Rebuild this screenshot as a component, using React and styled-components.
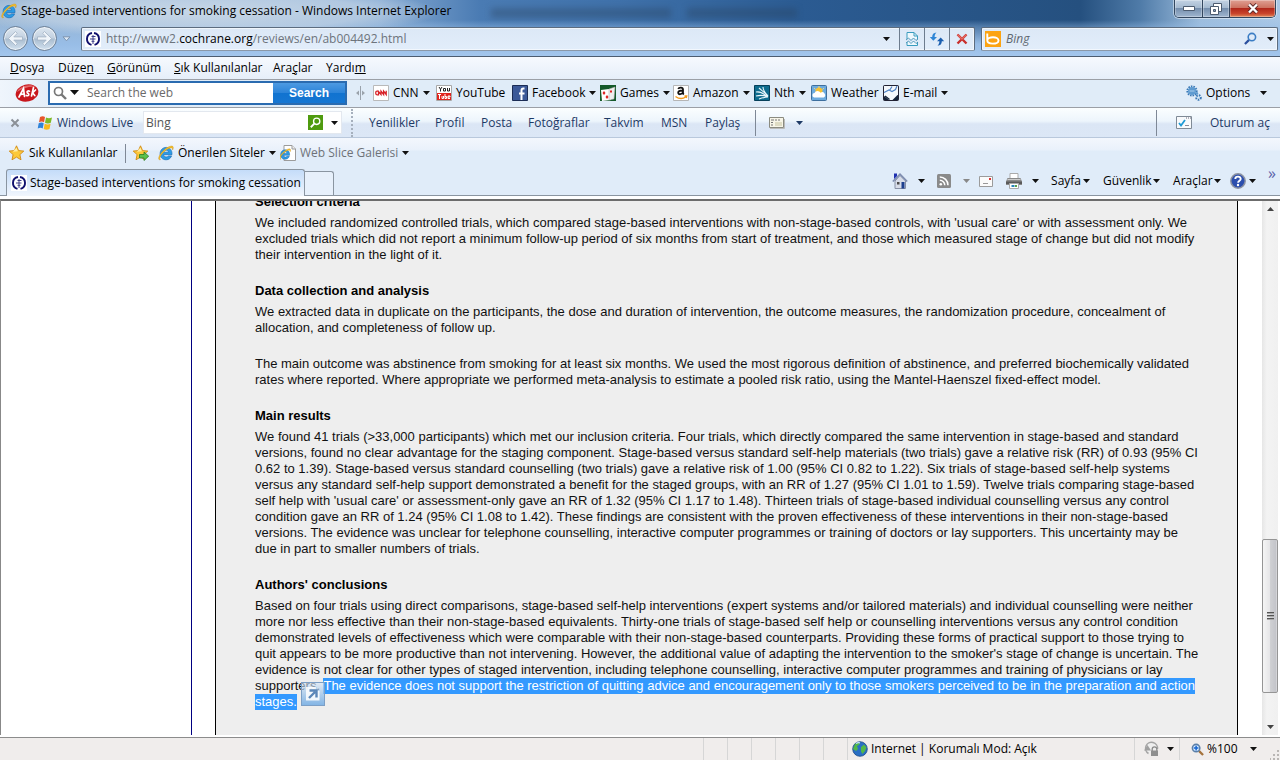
import React from "react";
import styled, { createGlobalStyle, css } from "styled-components";

const uiFont = '"Open Sans", "Noto Sans", sans-serif';

const GlobalStyle = createGlobalStyle`
  * { box-sizing: border-box; }
  html, body { margin: 0; padding: 0; }
  body { font-family: ${uiFont}; font-size: 12px; line-height: 16px; color: #111; background: #fff; overflow: hidden; }
  button, input { font: inherit; color: inherit; margin: 0; padding: 0; border: 0; background: none; border-radius: 0; outline: none; }
  button { text-align: left; white-space: nowrap; }
  a { color: inherit; text-decoration: none; }
  svg { display: block; flex: none; }
`;

const Window = styled.div`
  display: flex;
  flex-direction: column;
  height: 100vh;
  overflow: hidden;
`;

/* ---------- window frame ---------- */
const Glass = styled.header`
  background:
    radial-gradient(ellipse 240px 26px at 200px 12px, rgba(205, 219, 233, 0.9) 0, rgba(190, 209, 229, 0.75) 70%, rgba(170, 195, 224, 0) 100%),
    linear-gradient(180deg, rgba(150, 190, 232, 0) 20px, rgba(152, 190, 231, 0.35) 26px, #98bde6 44px, #a3c6ec 100%),
    linear-gradient(90deg, #9ab6d3 0, #87abd3 380px, #4a7bb3 480px, #3f71aa 620px, #2b5b92 800px, #25507f 1080px, #4f7ba8 1140px, #9dbddd 1200px, #aac8e6 100%);
  border-bottom: 1px solid #4c5c70;
`;

const TitleBar = styled.div`
  display: flex;
  align-items: flex-start;
  height: 26px;
  padding: 0 4px 0 1px;
`;

const Title = styled.h1`
  margin: 3px 0 0 4px;
  font-size: 12px;
  line-height: 16px;
  font-weight: 400;
  color: #000;
  white-space: nowrap;
`;

const TitleIcon = styled.div`
  margin-top: 3px;
`;

const GhostTitles = styled.div`
  flex: 1;
  display: flex;
  gap: 16px;
  margin: 8px 0 0 40px;
  filter: blur(3px);
`;

const Ghost = styled.i`
  width: ${(p) => p.$w}px;
  height: 10px;
  background: rgba(40, 62, 90, 0.35);
`;

const WindowButtons = styled.div`
  display: flex;
  border: 1px solid #33475f;
  border-top: 0;
  border-radius: 0 0 5px 5px;
  box-shadow: 0 0 0 1px rgba(255, 255, 255, 0.45);
  overflow: hidden;
`;

const WindowButton = styled.button`
  display: flex;
  align-items: center;
  justify-content: center;
  width: ${(p) => (p.$close ? 46 : 27)}px;
  height: 17px;
  background: ${(p) =>
    p.$close
      ? "linear-gradient(#dfa093 0, #cd7260 45%, #b1281b 50%, #c9452c 80%, #e08a5c 100%)"
      : "linear-gradient(#c3d3e4 0, #a5bad0 45%, #768fae 50%, #9fb6cf 100%)"};
  box-shadow: inset 0 0 0 1px rgba(255, 255, 255, 0.3);
  & + & { border-left: 1px solid #33475f; }
`;

const NavRow = styled.div`
  display: flex;
  align-items: center;
  height: 30px;
  padding: 0 2px 5px 3px;
`;

const RoundButton = styled.button`
  display: flex;
  align-items: center;
  justify-content: center;
  width: 25px;
  height: 25px;
  margin-right: 4px;
  border: 1px solid #6c7f95;
  border-radius: 50%;
  background: linear-gradient(#dde7f1 0, #c3d1e0 48%, #a9bccf 52%, #d3e2f0 100%);
  box-shadow: inset 0 0 0 1px rgba(255, 255, 255, 0.6);
`;

const NavHistory = styled.button`
  display: flex;
  justify-content: center;
  width: 10px;
  margin-right: 10px;
`;

const fieldBox = css`
  display: flex;
  align-items: center;
  height: 24px;
  border: 1px solid #5c6c7f;
  border-bottom-color: #8a98a8;
  border-radius: 2px;
  background: linear-gradient(#dce8f6, #e2edfa);
  box-shadow: inset 0 0 0 1px rgba(255, 255, 255, 0.55);
`;

const AddressBox = styled.div`
  ${fieldBox}
  flex: 1;
  padding-left: 3px;
  margin-right: 6px;
`;

const Favicon = styled.span`
  display: flex;
  align-items: center;
  justify-content: center;
  width: 16px;
  height: 16px;
  background: #fff;
  flex: none;
`;

const Address = styled.div`
  flex: 1;
  margin-left: 5px;
  color: #6d747c;
  white-space: nowrap;
  strong { font-weight: 400; color: #000; }
`;

const AddressButton = styled.button`
  display: flex;
  align-items: center;
  justify-content: center;
  align-self: stretch;
  width: 25px;
  border-left: ${(p) => (p.$plain ? "0" : "1px solid #6d7c8e")};
`;

const SearchBox = styled.form`
  ${fieldBox}
  width: 297px;
  padding: 0 3px;
`;

const SearchInput = styled.input`
  flex: 1;
  min-width: 0;
  margin-left: 5px;
  font-style: italic;
  &::placeholder { color: #5f6871; opacity: 1; }
`;

/* ---------- tool bars ---------- */
const MenuBar = styled.nav`
  display: flex;
  align-items: center;
  height: 23px;
  padding-left: 10px;
  background: linear-gradient(#f6f9fe, #e6eef9);
  border-bottom: 1px solid #9b9fa6;
`;

const MenuItem = styled.button`
  width: ${(p) => p.$w}px;
  color: #000;
`;

const AskBar = styled.div`
  display: flex;
  align-items: center;
  height: 28px;
  padding: 0 13px 2px 15px;
  background: linear-gradient(90deg, #eff5fc, #e0ecf8 60px);
  border-bottom: 1px solid #9b9fa6;
`;

const AskSearch = styled.form`
  display: flex;
  height: 24px;
  margin: 0 7px 0 9px;
  border: 2px solid #2a6bb0;
  background: #fff;
`;

const AskScope = styled.button`
  display: flex;
  align-items: center;
  gap: 3px;
  padding-left: 3px;
`;

const AskInput = styled.input`
  width: 194px;
  padding-left: 8px;
  &::placeholder { color: #6a6a6a; opacity: 1; }
`;

const AskSubmit = styled.button`
  width: 72px;
  text-align: center;
  font-family: "Liberation Sans", Arial, sans-serif;
  font-size: 12px;
  font-weight: 700;
  color: #fff;
  background: linear-gradient(#4d9ae2 0, #2c84d9 48%, #1173d0 52%, #1676d2 100%);
`;

const Splitter = styled.span`
  width: 19px;
  padding-left: 2px;
`;

const Tool = styled.button`
  display: flex;
  align-items: center;
  flex: none;
  width: ${(p) => p.$w}px;
  color: ${(p) => (p.$muted ? "#6e7278" : "#000")};
`;

const ToolText = styled.span`
  flex: 1;
  margin: 0 4px;
  white-space: nowrap;
`;

const CaretSlot = styled.span`
  flex: none;
  width: ${(p) => p.$w || 14}px;
`;

const Spacer = styled.div`
  flex: 1;
`;

const LiveBar = styled.div`
  display: flex;
  align-items: center;
  height: 30px;
  padding-left: 9px;
  color: #1e3a66;
  background: linear-gradient(#fbfeff 0, #edf5fc 45%, #dbe6f5 55%, #dce7f6 100%);
  border-bottom: 1px solid #b9c8dc;
`;

const CloseTool = styled.button`
  width: 28px;
  padding-left: 1px;
`;

const LiveBrand = styled.a`
  display: flex;
  align-items: center;
  gap: 4px;
  width: 106px;
  white-space: nowrap;
`;

const LiveSearch = styled.form`
  display: flex;
  align-items: center;
  width: 199px;
  height: 23px;
  padding-right: 3px;
  background: #fff;
  border: 1px solid #e3e8ef;
`;

const LiveInput = styled.input`
  flex: 1;
  min-width: 0;
  padding-left: 2px;
  color: #555;
`;

const SquareButton = styled.button`
  display: flex;
  align-items: center;
  justify-content: center;
  width: 15px;
  height: 15px;
  margin-right: 8px;
  background: #4f9b0f;
`;

const Dots = styled.i`
  height: 28px;
  margin: 0 16px 0 9px;
  border-left: 2px dotted #a6b0bd;
`;

const LiveLink = styled.a`
  width: ${(p) => p.$w}px;
  white-space: nowrap;
`;

const Rule = styled.i`
  flex: none;
  width: 1px;
  height: ${(p) => p.$h || 26}px;
  margin-right: ${(p) => p.$gap || 0}px;
  background: #7e8896;
`;

const FavBar = styled.div`
  display: flex;
  align-items: center;
  height: 30px;
  padding-left: 9px;
  background: linear-gradient(#f3f7fd 0, #e9f1fb 12px, #e0ecf9 13px);
`;

const TabBar = styled.div`
  display: flex;
  align-items: flex-end;
  height: 28px;
  padding: 0 4px 0 6px;
  background: #e0ecf9;
  border-bottom: 1px solid #8a95a1;
`;

const Tab = styled.button`
  display: flex;
  align-items: center;
  gap: 3px;
  width: 299px;
  height: 27px;
  padding: 0 4px;
  margin-bottom: -1px;
  border: 1px solid #8a95a1;
  border-bottom: 0;
  border-radius: 3px 3px 0 0;
  background: linear-gradient(#c4dcf9, #f1f6fd);
  color: #000;
`;

const NewTab = styled.button`
  width: 29px;
  height: 24px;
  border: 1px solid #8a95a1;
  border-left: 0;
  border-bottom: 0;
  border-radius: 0 3px 0 0;
  background: #e7f0fb;
`;

const Commands = styled.div`
  display: flex;
  align-items: center;
  height: 28px;
`;

const Command = styled.button`
  display: flex;
  align-items: center;
  flex: none;
  width: ${(p) => p.$w}px;
  color: #000;
`;

const CommandLabel = styled.span`
  flex: 1;
`;

const More = styled.button`
  align-self: flex-start;
  height: 12px;
  line-height: 12px;
  font-size: 16px;
  color: #5a62a8;
`;

/* ---------- page ---------- */
const Viewport = styled.main`
  flex: 1;
  min-height: 0;
  display: flex;
  margin-top: 3px;
  padding-right: 2px;
  border-top: 2px solid #6c6c6c;
  border-left: 1px solid #888;
  overflow: hidden;
`;

const LeftColumn = styled.div`
  width: 191px;
  border-right: 1px solid #000080;
`;

const Sheet = styled.article`
  flex: 1;
  min-width: 0;
  margin: 0 24px 0 23px;
  padding: 0 39px;
  border: solid #000;
  border-width: 0 1px;
  background: #eee;
  overflow: hidden;
  font-family: "Liberation Sans", Arial, sans-serif;
  font-size: 13px;
  line-height: 16px;
  color: #111;
`;

const Scrolled = styled.div`
  margin-top: -7px;
`;

const Heading = styled.h2`
  margin: 0 0 5px;
  font-size: 13px;
  line-height: 16px;
  font-weight: 700;
  color: #000;
`;

const Para = styled.p`
  margin: 0 0 20px;
  white-space: nowrap;
`;

const Selected = styled.mark`
  padding-bottom: 1px;
  background: #3399ff;
  color: #fff;
`;

const Anchor = styled.span`
  position: relative;
`;

const Accelerator = styled.button`
  position: absolute;
  left: 4px;
  bottom: 3px;
  display: flex;
  align-items: center;
  justify-content: center;
  width: 24px;
  height: 24px;
  border: 1px solid #7c9fc6;
  background: linear-gradient(rgba(214, 229, 245, 0.6), rgba(120, 175, 228, 0.9));
`;

const ScrollTrack = styled.div`
  display: flex;
  flex-direction: column;
  width: 16px;
  background: linear-gradient(90deg, #e6e6e6, #f3f3f3 30%, #f0f0f0);
`;

const ScrollArrow = styled.button`
  display: flex;
  align-items: center;
  justify-content: center;
  height: 16px;
`;

const ScrollGap = styled.i`
  flex: ${(p) => p.$part};
`;

const Thumb = styled.div`
  flex: 153;
  display: flex;
  flex-direction: column;
  justify-content: center;
  align-items: center;
  gap: 1px;
  border: 1px solid #959595;
  border-radius: 2px;
  background: linear-gradient(90deg, #f5f5f5 0, #e6e6e8 48%, #cfd0d3 52%, #c4c5ca 90%, #dcdcdf 100%);
  i { width: 7px; height: 2px; background: #555; border-bottom: 1px solid #aaa; }
`;

/* ---------- status bar ---------- */
const StatusBar = styled.footer`
  display: flex;
  align-items: center;
  height: 23px;
  margin-top: 2px;
  border-top: 1px solid #8c8c8c;
  background: #f0edec;
  color: #000;
`;

const Pane = styled.div`
  display: flex;
  align-items: center;
  align-self: stretch;
  width: ${(p) => p.$w}px;
  padding-left: ${(p) => p.$pad || 0}px;
  border-left: 1px solid #d6d6d6;
  white-space: nowrap;
`;

const PaneText = styled.span`
  flex: 1;
  margin-left: 3px;
`;

const Grip = styled.span`
  align-self: flex-end;
`;

/* ---------- drawings ---------- */
const Svg = ({ w = 16, h = 16, vb, children }) => (
  <svg width={w} height={h} viewBox={vb || `0 0 ${w} ${h}`} fill="none" aria-hidden="true">
    {children}
  </svg>
);

const Caret = ({ color = "#111" }) => (
  <Svg w={7} h={4}>
    <path d="M0 0h7L3.5 4z" fill={color} />
  </Svg>
);

const IeShape = () => (
  <>
    <path d="M14 9.700H5.600c.2 1.400 1.200 2.200 2.600 2.200 1 0 1.700-.4 2.200-1h3.200c-.8 2.400-2.900 3.900-5.500 3.900-3.600 0-6-2.500-6-6C2.100 5 4.700 2.400 8.200 2.400c3.800 0 6.100 2.900 5.800 7.300zM5.600 7.200h4.900C10.300 5.800 9.400 5.200 8.100 5.200S5.800 5.900 5.600 7.200z" fill="#2b9be6" stroke="#1464ad" strokeWidth=".6" />
    <path d="M2.600 14.600C-.5 15.600.3 11.400 3.600 7.500 7.400 3 13.200-.2 14.900 1.500c.7.8.3 2.300-.3 3.500.1-1.300 0-2-1-2.100C10.800 2.700 6.600 5.600 4 9c-2 2.700-3 5.200-1.400 5.600z" fill="#f5c12e" stroke="#c78d14" strokeWidth=".4" />
  </>
);

const IeIcon = () => <Svg><IeShape /></Svg>;

const IePage = () => (
  <Svg>
    <path d="M4 .5h8l3.500 3.500v11.500H4z" fill="#fff" stroke="#9b9b9b" />
    <path d="M12 .5V4h3.500" stroke="#9b9b9b" fill="#eee" />
    <g transform="translate(-1 3) scale(.76)"><IeShape /></g>
  </Svg>
);

const Cochrane = () => (
  <Svg>
    <path d="M7 2A6.100 6.100 0 0 0 6.500 13.900M9 2a6.100 6.100 0 0 1 .5 11.900" stroke="#10106e" strokeWidth="1.900" />
    <path d="M8 4v9M6.500 5.500h4M5 8h5.500M6.500 10.300h3" stroke="#3c3c88" strokeWidth="1" />
  </Svg>
);

const RoundArrow = ({ flip }) => (
  <Svg w={17} h={17}>
    <g transform={flip ? "matrix(-1 0 0 1 17 0)" : undefined}>
      <path d="M8.500 1.500l-7 7 7 7 1.800-1.800-3.500-3.600H15.500V6.900H6.800l3.500-3.600z" fill="#f0f5fa" stroke="#a3b3c4" strokeWidth=".8" />
    </g>
  </Svg>
);

const BrokenPage = () => (
  <Svg>
    <path d="M3 8V1.500h7L13.500 5v3M3 11v3.500h10.500V11" fill="#eef8fd" stroke="#3a9cbf" />
    <path d="M10 1.500V5h3.500" stroke="#3a9cbf" />
    <path d="M2 9l2.500-2L7 9.500 9.500 7 12 9.500 14 8M2 12l2.500-2L7 12.500 9.500 10l2.500 2.500 2-1.500" stroke="#3f8fb3" strokeWidth=".9" />
  </Svg>
);

const Refresh = () => (
  <Svg>
    <path d="M7.500 1.500C4.500 1.800 3.200 3.200 3.200 6H.8L4.300 9.700 8 6H5.600c0-1.800.5-3 1.900-4.500z" fill="#2f86d6" />
    <path d="M8.500 14.800c3-.3 4.300-1.700 4.300-4.500h2.400L11.700 6.600 8 10.300h2.400c0 1.800-.5 3-1.900 4.500z" fill="#1b5fb0" />
  </Svg>
);

const StopX = () => (
  <Svg w={14} h={14}>
    <path d="M2.500 2.500l9 9M11.500 2.500l-9 9" stroke="#c9302c" strokeWidth="2.400" />
    <path d="M2.500 2.500L7 7l4.500-4.500" stroke="#e26a63" strokeWidth="1.400" />
  </Svg>
);

const BingIcon = () => (
  <Svg>
    <path d="M0 0h16v16H0z" fill="#fca311" />
    <path d="M2.300 2.500v6.800M2.300 9.500c0 2 2.200 3.100 5.500 3.100s5.700-1 5.700-3.200S11 6.200 8 6.200c-2.800 0-5.700 1-5.700 3.300z" stroke="#fff" strokeWidth="1.900" />
  </Svg>
);

const Lens = ({ color = "#2d6cb5", handle, flip, plus, size = 14 }) => (
  <Svg w={size} h={size} vb="0 0 14 14">
    <g transform={flip ? "matrix(-1 0 0 1 14 0)" : undefined}>
      <path d="M8.500 8.500L13 13" stroke={handle || color} strokeWidth="2.400" />
      <circle cx="5.500" cy="5.500" r="4" fill={plus ? "#d9ecff" : "none"} stroke={color} strokeWidth="1.700" />
      {plus && <path d="M5.500 3v5M3 5.500h5" stroke="#1464d2" strokeWidth="1.600" />}
    </g>
  </Svg>
);

const AskLogo = () => (
  <Svg w={24} h={20}>
    <ellipse cx="12" cy="10" rx="11.500" ry="8.600" transform="rotate(-14 12 10)" fill="#c8171d" />
    <path d="M2 9C4 4 14 0 21 4c-6-1-13 1-19 5z" fill="#e4686a" />
    <g stroke="#fff" strokeWidth="1.700" strokeLinecap="round">
      <path d="M4 14L8.500 5.500l1 8M6 11.500l3.200-.6" />
      <path d="M14.500 8.200c-1.500-.8-3 .3-2.200 1.400.8 1 1.700 1 1.500 2.100-.2 1.200-1.800 1.300-2.600.6M18.500 4.500l-2 8.500M20.500 7l-3 2.800 2.300 2.700" />
    </g>
  </Svg>
);

const SplitIcon = () => (
  <Svg w={9} h={14}>
    <path d="M4.500 0v14" stroke="#9aa2ab" />
    <path d="M3 4.500v5L0 7zM6 4.500v5L9 7z" fill="#9aa2ab" />
  </Svg>
);

const CnnIcon = () => (
  <Svg>
    <path d="M.5.5h15v15H.5z" fill="#fff" stroke="#b9b9b9" />
    <path d="M5.500 6.200H4Q2.700 6.200 2.700 8T4 9.800h1.500V6.500L8 9.500V6.200l2.600 3.300V6.200l2.600 3.300V5.800" stroke="#d81f26" strokeWidth="1.300" />
  </Svg>
);

const YouTubeIcon = () => (
  <Svg>
    <path d="M.5.5h15v15H.5z" fill="#fff" stroke="#a8a8a8" />
    <path d="M1 8h14v7H1z" fill="#e0251f" />
    <path d="M3 2l1.500 2.300L6 2M4.500 4v2.500M7.500 3.500h2v2.500h-2zM11.500 3v3h2V3" stroke="#222" />
    <path d="M2 9.500h3M3.500 9.500V14M6 11v2.500h1.500V11M9 9v4.500h1.500v-2H9M12 12h2v-1h-2v2.500h2" stroke="#fff" />
  </Svg>
);

const FacebookIcon = () => (
  <Svg>
    <path d="M.5.500h15v15H.5z" fill="#3b5998" stroke="#1b2c55" />
    <path d="M12.500 3.500h-1.200c-1.300 0-1.800.7-1.800 2V15M7 8.500h5.500" stroke="#fff" strokeWidth="2" />
  </Svg>
);

const GamesIcon = () => (
  <Svg>
    <path d="M0 0h16v16H0z" fill="#14592a" />
    <path d="M1 5l8-1 2 11-9 1z" fill="#fff" />
    <path d="M9 4l6-2-1 12-5 1z" fill="#eee" stroke="#aaa" strokeWidth=".5" />
    <path d="M4 6l1.500 2L4 10 2.500 8zM7 10l1.500 2L7 14l-1.500-2zM10 5.500h2v2h-2z" fill="#d22" />
  </Svg>
);

const AmazonIcon = () => (
  <Svg>
    <path d="M.5.500h15v15H.5z" fill="#fff" stroke="#b5b5b5" />
    <path d="M5.200 4c.8-1.800 4.800-1.800 4.800.6V8c0 .7.300 1 .8 1.500M10 5.500C7 5.500 5.200 6 5.200 7.700c0 2.200 3.800 2 4.700-.4" stroke="#111" strokeWidth="1.800" />
    <path d="M2.500 11.500c3.500 2.600 7.500 2.500 10.500.3M11.500 11h2.200l-.5 2" stroke="#f39a1d" strokeWidth="1.400" />
  </Svg>
);

const NthIcon = () => (
  <Svg>
    <path d="M.5.500h15v15H.5z" fill="#0d6c8e" stroke="#06405a" />
    <path d="M2 7c4-1 7 1 12 5M5 3c2 2 5 4 9 8M9 2c0 3 2 6 5 9M2 11c4-1 8-1 12 1M5 14c3-1 6-2 9-2" stroke="#e9f6fb" strokeWidth="1.100" />
  </Svg>
);

const WeatherIcon = () => (
  <Svg>
    <rect x=".5" y=".5" width="15" height="15" rx="1" fill="#6cabdf" stroke="#3e6f9e" />
    <circle cx="8" cy="6" r="3.500" fill="#f9c22f" />
    <path d="M8 1v2M3 3l1.500 1.500M13 3l-1.500 1.500" stroke="#f9d76a" />
    <path d="M3 12.500a2.300 2.300 0 0 1 .5-4.500 3.300 3.300 0 0 1 6-.3 2.500 2.500 0 0 1 3.300 4.800z" fill="#fff" />
  </Svg>
);

const EmailIcon = () => (
  <Svg>
    <rect x=".5" y=".5" width="15" height="15" rx="1" fill="#15243a" stroke="#223" />
    <path d="M1 1h14v8.500L9.500 15H6L1 11z" fill="#f4f8fc" />
    <path d="M1 7.500l5-2.500 3 1.500 3.500-2L14 1M6.500 5.500L9 1.500" stroke="#4f83c4" strokeWidth="1.200" />
    <path d="M2 11l4.500 3.500" stroke="#15243a" strokeWidth="1.400" />
  </Svg>
);

const Gears = () => (
  <Svg>
    <circle cx="6" cy="6" r="4.600" stroke="#3a78b5" strokeWidth="2" strokeDasharray="1.500 1" />
    <circle cx="6" cy="6" r="4" fill="#5e9bd1" />
    <path d="M3.500 6h5" stroke="#a9cdec" />
    <circle cx="12.500" cy="12.500" r="2.200" stroke="#3a78b5" strokeWidth="2.200" strokeDasharray="1.400 1" />
    <circle cx="12.500" cy="12.500" r="1" fill="#d9ebf8" />
    <circle cx="11" cy="8.500" r="1.200" fill="#5e9bd1" />
  </Svg>
);

const GreyX = () => (
  <Svg w={10} h={10}>
    <path d="M1.500 1.500l7 7M8.500 1.500l-7 7" stroke="#8b9097" strokeWidth="2" />
  </Svg>
);

const WindowsFlag = () => (
  <Svg>
    <path d="M3 2c2-1 3.500-1 5 0L7 7.200c-1.500-.9-3-.9-5 0z" fill="#e8552b" />
    <path d="M9 2.500c2 1 3.800 1 6 0l-1.200 5.200c-2 1-3.800 1-5.800 0z" fill="#7fba27" />
    <path d="M1.700 8.200c2-1 3.500-1 5 0l-1 5.200c-1.500-.9-3-.9-5 0z" fill="#2f83d8" />
    <path d="M7.700 8.800c2 1 3.800 1 5.900 0L12.500 14c-2 1-3.800 1-5.800 0z" fill="#f8b91c" />
  </Svg>
);

const FormIcon = () => (
  <Svg w={16} h={12}>
    <path d="M.5.500h14v10H.5z" fill="#f7f5e8" stroke="#8b8b80" />
    <path d="M2 3h3M6 3h2M9 3h2M2 5.500h2M2 8h2" stroke="#777" />
    <path d="M6 5h7v4H6z" fill="#dfdcc4" />
    <path d="M1 11.500h14.500V2" stroke="#bbb" />
  </Svg>
);

const CheckWindow = () => (
  <Svg w={16} h={14}>
    <path d="M.5.500h15v12H.5z" fill="#f8fafc" stroke="#7f8a96" />
    <path d="M10 2h1M12 2h1M14 2h1" stroke="#667" />
    <path d="M3 7l2 2.500L9 4" stroke="#1d9ad6" strokeWidth="1.800" />
    <path d="M9 9.500h4" stroke="#889" />
  </Svg>
);

const Star = ({ add }) => (
  <Svg>
    <path d="M7.500.8l2.100 4.800 5.200.5-3.900 3.500 1.100 5.200-4.500-2.700L3 14.800l1.100-5.200L.2 6.100l5.200-.5z" fill="#fcc93a" stroke="#d18a14" strokeWidth=".9" />
    <path d="M7.500 2.500l1.300 3.700-5 .6z" fill="#feeca3" />
    {add && <path d="M6.500 9.500H11V7l4.700 4.200L11 15.500V13H6.500z" fill="#5cc04b" stroke="#2b7f22" strokeWidth=".8" />}
  </Svg>
);

const Home = () => (
  <Svg>
    <path d="M3 8l5-5.500L13.500 8v7.500H3z" fill="#d7dce8" stroke="#8790a5" />
    <path d="M.8 8.500L8 1.200l7.200 7.300" stroke="#7f8db0" strokeWidth="1.700" />
    <path d="M2 0.500h3v2.500L2 6z" fill="#1d2fb0" />
    <path d="M9.500 9h3v6.500h-3z" fill="#1d3f8e" />
    <path d="M5 9h2.500v2.500H5z" fill="#4a4a4a" />
  </Svg>
);

const Rss = () => (
  <Svg w={14} h={14}>
    <rect width="14" height="14" rx="1.500" fill="#8a8a8a" />
    <circle cx="3.800" cy="10.200" r="1.300" fill="#fff" />
    <path d="M2.800 6.200a5 5 0 0 1 5 5M2.800 3a8.200 8.200 0 0 1 8.200 8.200" stroke="#fff" strokeWidth="1.500" />
  </Svg>
);

const Mail = () => (
  <Svg w={14} h={11}>
    <path d="M.5.500h13v10H.5z" fill="#fbfbfb" stroke="#9b9b9b" />
    <path d="M10 2h2v2h-2z" fill="#d33" />
    <path d="M4 7.500h5" stroke="#999" />
  </Svg>
);

const Printer = () => (
  <Svg>
    <path d="M4 .5h8V6H4z" fill="#fff" stroke="#aaa" />
    <path d="M1.500 5h13L16 8.500V12H0V8.500z" fill="#8a8a8a" />
    <path d="M0 8.500h16V11H0z" fill="#5a5a5a" />
    <path d="M1.500 6.500h13" stroke="#ccc" />
    <path d="M3.500 10.500h9v5h-9z" fill="#fff" stroke="#aaa" />
    <path d="M5.500 12h3v2h-3z" fill="#2784b8" />
    <path d="M9 12h2v2H9z" fill="#5aa04a" />
  </Svg>
);

const Help = () => (
  <Svg>
    <circle cx="8" cy="8" r="7.200" fill="#2c4fae" stroke="#8d93a1" strokeWidth="1.500" />
    <path d="M5.300 6c.1-3.300 5.600-3.100 5.400 0-.1 1.700-2.600 1.700-2.600 3.700" stroke="#fff" strokeWidth="1.900" />
    <circle cx="8" cy="12" r="1.200" fill="#fff" />
  </Svg>
);

const Globe = () => (
  <Svg>
    <circle cx="8" cy="8" r="7.300" fill="#2a6fc4" stroke="#1c4a86" strokeWidth=".8" />
    <path d="M3 3c2-2 4-2 5-1.500L7 4 5 5l1 3-2 2-3-2zM9 6l3-2.500 2.500 3L13 10l-2.500 3L9 10.500z" fill="#52b848" />
    <path d="M4 2.500c1.500-1 3-1 4-.6" stroke="#bfe0ff" strokeWidth="1.200" />
  </Svg>
);

const Protected = () => (
  <Svg>
    <path d="M4.500 12.500A6 6 0 1 1 13.500 8" fill="#eee" stroke="#a5a5a5" strokeWidth="1.500" />
    <path d="M0 9.500L3.500 4 7 9.500z" fill="#a0a0a0" />
    <path d="M8.200 10V8.200a2.300 2.300 0 0 1 4.600 0V10" stroke="#8a8a8a" strokeWidth="1.300" />
    <path d="M7 9.500h7v5.500H7z" fill="#8f8f8f" />
  </Svg>
);

const GripDots = () => (
  <Svg w={10} h={10}>
    <path d="M7 0h2v2H7zM7 4h2v2H7zM7 8h2v2H7zM3 4h2v2H3zM3 8h2v2H3zM-1 8h2v2h-2z" fill="#b9b6b4" />
  </Svg>
);

/* ---------- content ---------- */
const menus = [
  ["", "D", "osya", 48],
  ["Düze", "n", "", 49],
  ["", "G", "örünüm", 67],
  ["", "S", "ık Kullanılanlar", 99],
  ["Ara", "ç", "lar", 53],
  ["Yardı", "m", "", 50],
];

const askTools = [
  { label: "CNN", icon: <CnnIcon />, w: 63, caret: true },
  { label: "YouTube", icon: <YouTubeIcon />, w: 76 },
  { label: "Facebook", icon: <FacebookIcon />, w: 88, caret: true },
  { label: "Games", icon: <GamesIcon />, w: 73, caret: true },
  { label: "Amazon", icon: <AmazonIcon />, w: 81, caret: true },
  { label: "Nth", icon: <NthIcon />, w: 57, caret: true },
  { label: "Weather", icon: <WeatherIcon />, w: 72 },
  { label: "E-mail", icon: <EmailIcon />, w: 71, caret: true },
];

const liveLinks = [
  ["Yenilikler", 66],
  ["Profil", 46],
  ["Posta", 47],
  ["Fotoğraflar", 76],
  ["Takvim", 57],
  ["MSN", 44],
  ["Paylaş", 50],
];

const lines = (items) =>
  items.map((line, i) => (
    <React.Fragment key={i}>
      {i > 0 && <br />}
      {line}
    </React.Fragment>
  ));

const criteria = [
  "We included randomized controlled trials, which compared stage-based interventions with non-stage-based controls, with 'usual care' or with assessment only. We",
  "excluded trials which did not report a minimum follow-up period of six months from start of treatment, and those which measured stage of change but did not modify",
  "their intervention in the light of it.",
];

const collection = [
  "We extracted data in duplicate on the participants, the dose and duration of intervention, the outcome measures, the randomization procedure, concealment of",
  "allocation, and completeness of follow up.",
];

const outcome = [
  "The main outcome was abstinence from smoking for at least six months. We used the most rigorous definition of abstinence, and preferred biochemically validated",
  "rates where reported. Where appropriate we performed meta-analysis to estimate a pooled risk ratio, using the Mantel-Haenszel fixed-effect model.",
];

const results = [
  "We found 41 trials (>33,000 participants) which met our inclusion criteria. Four trials, which directly compared the same intervention in stage-based and standard",
  "versions, found no clear advantage for the staging component. Stage-based versus standard self-help materials (two trials) gave a relative risk (RR) of 0.93 (95% CI",
  "0.62 to 1.39). Stage-based versus standard counselling (two trials) gave a relative risk of 1.00 (95% CI 0.82 to 1.22). Six trials of stage-based self-help systems",
  "versus any standard self-help support demonstrated a benefit for the staged groups, with an RR of 1.27 (95% CI 1.01 to 1.59). Twelve trials comparing stage-based",
  "self help with 'usual care' or assessment-only gave an RR of 1.32 (95% CI 1.17 to 1.48). Thirteen trials of stage-based individual counselling versus any control",
  "condition gave an RR of 1.24 (95% CI 1.08 to 1.42). These findings are consistent with the proven effectiveness of these interventions in their non-stage-based",
  "versions. The evidence was unclear for telephone counselling, interactive computer programmes or training of doctors or lay supporters. This uncertainty may be",
  "due in part to smaller numbers of trials.",
];

const conclusions = [
  "Based on four trials using direct comparisons, stage-based self-help interventions (expert systems and/or tailored materials) and individual counselling were neither",
  "more nor less effective than their non-stage-based equivalents. Thirty-one trials of stage-based self help or counselling interventions versus any control condition",
  "demonstrated levels of effectiveness which were comparable with their non-stage-based counterparts. Providing these forms of practical support to those trying to",
  "quit appears to be more productive than not intervening. However, the additional value of adapting the intervention to the smoker's stage of change is uncertain. The",
  "evidence is not clear for other types of staged intervention, including telephone counselling, interactive computer programmes and training of physicians or lay",
];

export default function App() {
  return (
    <Window>
      <GlobalStyle />
      <Glass>
        <TitleBar>
          <TitleIcon><IeIcon /></TitleIcon>
          <Title>Stage-based interventions for smoking cessation - Windows Internet Explorer</Title>
          <GhostTitles aria-hidden="true"><Ghost $w={180} /><Ghost $w={110} /></GhostTitles>
          <WindowButtons>
            <WindowButton aria-label="Minimize">
              <Svg w={12} h={6}><path d="M.5.500h11v4H.5z" fill="#fff" stroke="#4d5c70" /></Svg>
            </WindowButton>
            <WindowButton aria-label="Restore">
              <Svg w={12} h={12}>
                <path d="M3.500.500h8v8h-8z" fill="#fff" stroke="#4d5c70" />
                <path d="M.5 3.500h8v8h-8z" fill="#fff" stroke="#4d5c70" />
                <path d="M3.500 6.500h2v2h-2z" fill="#8aa0ba" stroke="#4d5c70" />
              </Svg>
            </WindowButton>
            <WindowButton $close aria-label="Close">
              <Svg w={12} h={11}>
                <path d="M2 1.500l8 8M10 1.500l-8 8" stroke="#5b2a2a" strokeWidth="4" />
                <path d="M2 1.500l8 8M10 1.500l-8 8" stroke="#fff" strokeWidth="2.400" />
              </Svg>
            </WindowButton>
          </WindowButtons>
        </TitleBar>
        <NavRow>
          <RoundButton aria-label="Back"><RoundArrow /></RoundButton>
          <RoundButton aria-label="Forward"><RoundArrow flip /></RoundButton>
          <NavHistory aria-label="Recent pages">
            <Svg w={9} h={6}><path d="M1 .8h7L4.500 4.800z" fill="#dde9f5" stroke="#7e95b0" /></Svg>
          </NavHistory>
          <AddressBox>
            <Favicon><Cochrane /></Favicon>
            <Address>http://www2.<strong>cochrane.org</strong>/reviews/en/ab004492.html</Address>
            <AddressButton $plain aria-label="Address list"><Caret /></AddressButton>
            <AddressButton aria-label="Compatibility view"><BrokenPage /></AddressButton>
            <AddressButton aria-label="Refresh"><Refresh /></AddressButton>
            <AddressButton aria-label="Stop"><StopX /></AddressButton>
          </AddressBox>
          <SearchBox>
            <BingIcon />
            <SearchInput aria-label="Bing" placeholder="Bing" />
            <Tool type="button" $w={23} aria-label="Search"><Lens flip size={13} color="#3b7dc4" handle="#2a4f9e" /></Tool>
            <Caret />
          </SearchBox>
        </NavRow>
      </Glass>

      <MenuBar>
        {menus.map(([a, key, b, w]) => (
          <MenuItem key={a + key} $w={w}>{a}<u>{key}</u>{b}</MenuItem>
        ))}
      </MenuBar>

      <AskBar>
        <AskLogo />
        <AskSearch>
          <AskScope type="button" aria-label="Search scope">
            <Lens color="#777" size={14} />
            <Svg w={9} h={5}><path d="M0 0h9L4.500 5z" fill="#111" /></Svg>
          </AskScope>
          <AskInput aria-label="Search the web" placeholder="Search the web" />
          <AskSubmit type="button">Search</AskSubmit>
        </AskSearch>
        <Splitter><SplitIcon /></Splitter>
        {askTools.map((t) => (
          <Tool key={t.label} $w={t.w}>
            {t.icon}
            <ToolText>{t.label}</ToolText>
            {t.caret && <CaretSlot><Caret /></CaretSlot>}
          </Tool>
        ))}
        <Spacer />
        <Tool $w={81}>
          <Gears />
          <ToolText>Options</ToolText>
          <CaretSlot $w={7}><Caret /></CaretSlot>
        </Tool>
      </AskBar>

      <LiveBar>
        <CloseTool aria-label="Close toolbar"><GreyX /></CloseTool>
        <LiveBrand href="#live"><WindowsFlag />Windows Live</LiveBrand>
        <LiveSearch>
          <LiveInput aria-label="Live search" defaultValue="Bing" />
          <SquareButton type="button" aria-label="Search"><Lens flip color="#fff" size={11} /></SquareButton>
          <Caret />
        </LiveSearch>
        <Dots />
        {liveLinks.map(([label, w]) => (
          <LiveLink key={label} $w={w} href="#live">{label}</LiveLink>
        ))}
        <Rule $gap={13} />
        <Tool $w={34} aria-label="Form fill">
          <FormIcon />
          <ToolText />
          <Caret color="#1e3a66" />
        </Tool>
        <Spacer />
        <Rule $gap={19} />
        <Tool $w={34} aria-label="Page check"><CheckWindow /></Tool>
        <LiveLink $w={70} href="#signin">Oturum aç</LiveLink>
      </LiveBar>

      <FavBar>
        <Tool $w={116}><Star /><ToolText>Sık Kullanılanlar</ToolText></Tool>
        <Rule $h={19} $gap={7} />
        <Tool $w={25} aria-label="Add to favorites"><Star add /></Tool>
        <Tool $w={122}><IeIcon /><ToolText>Önerilen Siteler</ToolText><CaretSlot $w={18}><Caret /></CaretSlot></Tool>
        <Tool $w={124} $muted><IePage /><ToolText>Web Slice Galerisi</ToolText><Caret /></Tool>
      </FavBar>

      <TabBar>
        <Tab><Favicon><Cochrane /></Favicon>Stage-based interventions for smoking cessation</Tab>
        <NewTab aria-label="New tab" />
        <Spacer />
        <Commands>
          <Command $w={26} aria-label="Home"><Home /></Command>
          <Command $w={19} aria-label="Home list"><Caret /></Command>
          <Command $w={26} aria-label="Feeds"><Rss /></Command>
          <Command $w={16} aria-label="Feeds list"><Caret color="#888" /></Command>
          <Command $w={27} aria-label="Read mail"><Mail /></Command>
          <Command $w={26} aria-label="Print"><Printer /></Command>
          <Command $w={19} aria-label="Print list"><Caret /></Command>
          <Command $w={52}><CommandLabel>Sayfa</CommandLabel><CaretSlot $w={20}><Caret /></CaretSlot></Command>
          <Command $w={70}><CommandLabel>Güvenlik</CommandLabel><CaretSlot $w={20}><Caret /></CaretSlot></Command>
          <Command $w={57}><CommandLabel>Araçlar</CommandLabel><CaretSlot $w={16}><Caret /></CaretSlot></Command>
          <Command $w={38} aria-label="Help"><Help /><CommandLabel /><CaretSlot $w={19}><Caret /></CaretSlot></Command>
          <More aria-label="More commands">»</More>
        </Commands>
      </TabBar>

      <Viewport>
        <LeftColumn />
        <Sheet>
          <Scrolled>
            <Heading>Selection criteria</Heading>
            <Para>{lines(criteria)}</Para>
            <Heading>Data collection and analysis</Heading>
            <Para>{lines(collection)}</Para>
            <Para>{lines(outcome)}</Para>
            <Heading>Main results</Heading>
            <Para>{lines(results)}</Para>
            <Heading>Authors' conclusions</Heading>
            <Para>
              {lines(conclusions)}
              <br />
              supporters.{" "}
              <Selected>The evidence does not support the restriction of quitting advice and encouragement only to those smokers perceived to be in the preparation and action</Selected>
              <br />
              <Selected>stages.</Selected>
              <Anchor>
                <Accelerator aria-label="Accelerators">
                  <Svg>
                    <path d="M1 1h10v4h3.500v9.500H1z" fill="#fff" opacity=".85" />
                    <path d="M4 12l6-6M4.500 4.500h7v7" stroke="#5a86b8" strokeWidth="2.400" />
                  </Svg>
                </Accelerator>
              </Anchor>
            </Para>
          </Scrolled>
        </Sheet>
        <ScrollTrack>
          <ScrollArrow aria-label="Scroll up"><Svg w={7} h={4}><path d="M0 4h7L3.500 0z" fill="#444" /></Svg></ScrollArrow>
          <ScrollGap $part={323} />
          <Thumb><i /><i /><i /></Thumb>
          <ScrollGap $part={26} />
          <ScrollArrow aria-label="Scroll down"><Caret color="#444" /></ScrollArrow>
        </ScrollTrack>
      </Viewport>

      <StatusBar>
        <Spacer />
        {[0, 1, 2, 3, 4, 5].map((n) => <Pane key={n} $w={24} />)}
        <Pane $w={287} $pad={4}><Globe /><PaneText>Internet | Korumalı Mod: Açık</PaneText></Pane>
        <Pane $w={45} $pad={9}><Protected /><PaneText /><CaretSlot $w={12}><Caret /></CaretSlot></Pane>
        <Pane $w={91} $pad={11}>
          <Lens plus size={13} color="#5b7fa8" handle="#a5733c" />
          <PaneText>%100</PaneText>
          <CaretSlot $w={20}><Caret /></CaretSlot>
        </Pane>
        <Grip><GripDots /></Grip>
      </StatusBar>
    </Window>
  );
}
